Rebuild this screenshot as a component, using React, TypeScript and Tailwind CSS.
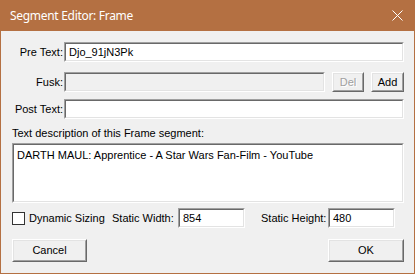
import type { ReactNode } from 'react'

const FONT = { fontFamily: '"Liberation Sans", Arial, sans-serif' }

function Field({ className = '', value = '', disabled = false }: { className?: string; value?: string; disabled?: boolean }) {
  return (
    <div className={`border border-t-[#a0a0a0] border-l-[#a0a0a0] border-b-white border-r-white ${className}`}>
      <div
        className={`h-full border border-t-[#696969] border-l-[#696969] border-b-[#e3e3e3] border-r-[#e3e3e3] pl-[3px] flex items-center text-[11px] text-black ${
          disabled ? 'bg-[#f0f0f0]' : 'bg-white'
        }`}
      >
        {value}
      </div>
    </div>
  )
}

function Button({ children, className = '', disabled = false }: { children: ReactNode; className?: string; disabled?: boolean }) {
  return (
    <div className={`border border-t-white border-l-white border-b-[#696969] border-r-[#696969] ${className}`}>
      <div
        className={`h-full border border-t-[#e3e3e3] border-l-[#e3e3e3] border-b-[#a0a0a0] border-r-[#a0a0a0] bg-[#f0f0f0] flex items-center justify-center text-[11px] ${
          disabled ? 'text-[#a0a0a0] [text-shadow:1px_1px_0_#fff]' : 'text-black'
        }`}
      >
        {children}
      </div>
    </div>
  )
}

export default function App() {
  return (
    <div className="w-[415px] h-[274px] flex flex-col bg-[#b47042] px-px pb-px" style={FONT}>
      {/* Title bar */}
      <div className="h-[31px] shrink-0 flex items-center justify-between pl-[9px] pr-[10px] text-white">
        <span className="text-[12px] tracking-[-0.3px]" style={{ fontFamily: '"Noto Sans", sans-serif' }}>
          Segment Editor: Frame
        </span>
        <svg width="11" height="11" viewBox="0 0 11 11" className="mr-[1px]">
          <path d="M0.5 0.5 L10.5 10.5 M10.5 0.5 L0.5 10.5" stroke="#fff" strokeWidth="1" />
        </svg>
      </div>

      {/* Body */}
      <div className="flex-1 bg-[#f0f0f0] pl-[11px] pr-[10px] pt-[11px] flex flex-col text-[11px] text-black">
        <div className="flex h-[20px]">
          <div className="w-[52px] pr-[1px] flex items-center justify-end">Pre Text:</div>
          <Field className="flex-1" value="Djo_91jN3Pk" />
        </div>

        <div className="flex h-[20px] mt-[10px]">
          <div className="w-[52px] pr-[1px] flex items-center justify-end">Fusk:</div>
          <Field className="flex-1" disabled />
          <Button className="w-[32px] ml-[7px]" disabled>
            Del
          </Button>
          <Button className="w-[33px] ml-[7px]">Add</Button>
        </div>

        <div className="flex h-[20px] mt-[7px]">
          <div className="w-[52px] pr-[1px] flex items-center justify-end">Post Text:</div>
          <Field className="flex-1" />
        </div>

        <div className="mt-[7px] h-[15px] flex items-center">Text description of this Frame segment:</div>

        <div className="mt-[2px] h-[60px] border border-t-[#a0a0a0] border-l-[#a0a0a0] border-b-white border-r-white">
          <div className="h-full border border-t-[#696969] border-l-[#696969] border-b-[#e3e3e3] border-r-[#e3e3e3] bg-white px-[3px] pt-[3px] leading-[14px]">
            DARTH MAUL: Apprentice - A Star Wars Fan-Film - YouTube
          </div>
        </div>

        <div className="mt-[5px] h-[20px] flex items-center">
          <div className="w-[100px] flex items-center">
            <div className="w-[13px] h-[13px] border border-[#333] bg-white" />
            <span className="ml-[4px]">Dynamic Sizing</span>
          </div>
          <div className="w-[66px]">Static Width:</div>
          <Field className="w-[67px] h-[20px]" value="854" />
          <div className="w-[67px] ml-[16px]">Static Height:</div>
          <Field className="w-[67px] h-[20px]" value="480" />
        </div>

        <div className="mt-[11px] h-[23px] flex justify-between">
          <Button className="w-[75px]">Cancel</Button>
          <Button className="w-[76px]">OK</Button>
        </div>
      </div>
    </div>
  )
}
